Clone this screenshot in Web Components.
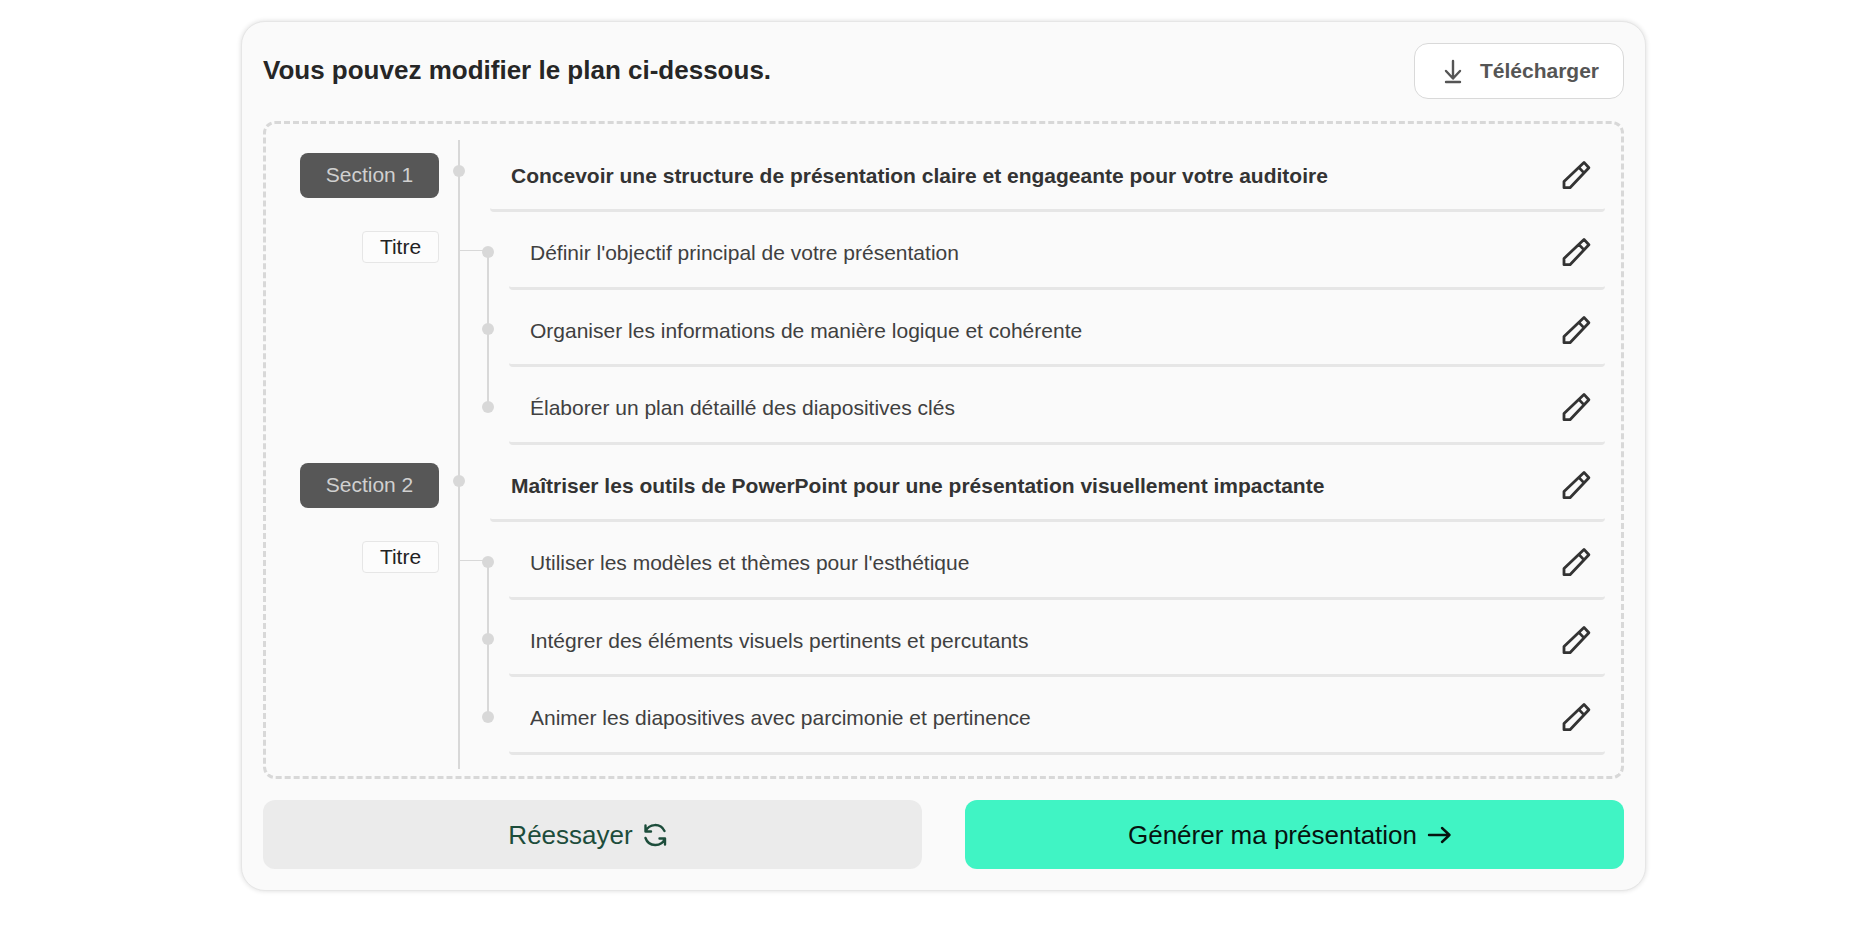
<!DOCTYPE html>
<html lang="fr">
<head>
<meta charset="utf-8">
<meta name="viewport" content="width=device-width, initial-scale=1">
<title>Plan de la présentation</title>
<style>
  body {
    margin: 0;
    padding: 21px 216px 36px 241px;
    background: #fff;
    font-family: "Liberation Sans", Arial, sans-serif;
    font-size: 21px;
    --line: #d8d8d8;
    --surface: #fafafa;
  }
</style>
</head>
<body>
<plan-card heading="Vous pouvez modifier le plan ci-dessous.">
  <download-button slot="tools">Télécharger</download-button>

  <plan-outline>
    <plan-section label="Section 1">
      <plan-row level="section" text="Concevoir une structure de présentation claire et engageante pour votre auditoire"></plan-row>
      <plan-row text="Définir l'objectif principal de votre présentation" first></plan-row>
      <plan-row text="Organiser les informations de manière logique et cohérente"></plan-row>
      <plan-row text="Élaborer un plan détaillé des diapositives clés" last></plan-row>
    </plan-section>
    <plan-section label="Section 2">
      <plan-row level="section" text="Maîtriser les outils de PowerPoint pour une présentation visuellement impactante"></plan-row>
      <plan-row text="Utiliser les modèles et thèmes pour l'esthétique" first></plan-row>
      <plan-row text="Intégrer des éléments visuels pertinents et percutants"></plan-row>
      <plan-row text="Animer les diapositives avec parcimonie et pertinence" last></plan-row>
    </plan-section>
  </plan-outline>

  <action-button slot="actions" icon="retry">Réessayer</action-button>
  <action-button slot="actions" icon="arrow" primary>Générer ma présentation</action-button>
</plan-card>

<script>
class PlanCard extends HTMLElement {
  constructor() {
    super();
    this.attachShadow({ mode: 'open' });
  }

  connectedCallback() {
    this.shadowRoot.innerHTML = `
      <style>
        :host {
          display: block; padding: 21px; border: 1px solid #e6e6e6;
          border-radius: 24px; background: var(--surface);
          box-shadow: 0 0 5px rgba(0,0,0,.14);
        }
        header { display: flex; align-items: center; justify-content: space-between; margin-bottom: 22px; }
        h1 { margin: 0; font-size: 26px; line-height: 30px; padding-bottom: 2px; color: #262626; }
        footer { display: grid; grid-template-columns: 1fr 1fr; gap: 43px; margin-top: 21px; }
      </style>
      <header>
        <h1>${this.getAttribute('heading') || ''}</h1>
        <slot name="tools"></slot>
      </header>
      <slot></slot>
      <footer><slot name="actions"></slot></footer>
    `;
  }
}

class DownloadButton extends HTMLElement {
  constructor() {
    super();
    this.attachShadow({ mode: 'open' });
    this.shadowRoot.innerHTML = `
      <style>
        :host { display: block; }
        button {
          display: flex; align-items: center; gap: 12px;
          height: 56px; padding: 0 24px 0 23px;
          border: 1px solid #d9d9d9; border-radius: 14px; background: #fff;
          font: bold 21px/24px "Liberation Sans", Arial, sans-serif;
          color: #555; cursor: pointer;
        }
        svg { display: block; fill: none; stroke: currentColor; stroke-width: 2.4; stroke-linecap: round; stroke-linejoin: round; }
      </style>
      <button type="button">
        <svg width="30" height="30" viewBox="0 0 30 30" aria-hidden="true">
          <path d="M15 5v17M8 15l7 7.500 7-7.500M8 26h14"/>
        </svg>
        <slot></slot>
      </button>
    `;
  }
}

class PlanOutline extends HTMLElement {
  constructor() {
    super();
    this.attachShadow({ mode: 'open' });
    this.shadowRoot.innerHTML = `
      <style>
        :host {
          display: block; padding: 16px 16px 7px;
          border: 3px dashed var(--line); border-radius: 12px;
        }
        .tree { position: relative; padding-bottom: 9px; }
        /* main rail, runs behind the section dots */
        .tree::before {
          content: ""; position: absolute; top: 0; bottom: 0; left: 176px;
          width: 2px; background: var(--line);
        }
      </style>
      <div class="tree"><slot></slot></div>
    `;
  }
}

class PlanSection extends HTMLElement {
  constructor() {
    super();
    this.attachShadow({ mode: 'open' });
  }

  connectedCallback() {
    this.shadowRoot.innerHTML = `
      <style>
        :host { display: flex; gap: 14px; min-height: 310px; }
        .labels {
          display: flex; flex-direction: column; align-items: flex-end; gap: 33px;
          flex: none; width: 157px; padding-top: 13px;
        }
        .badge, .tag { display: flex; align-items: center; justify-content: center; box-sizing: border-box; }
        .badge { width: 139px; height: 45px; padding-bottom: 2px; border-radius: 8px; background: #575757; color: #d0d0d0; }
        .tag { width: 77px; height: 32px; border: 1px solid #e6e6e6; border-radius: 4px; background: #fcfcfc; color: #222; }
        .rows { flex: 1; min-width: 0; display: grid; grid-auto-rows: 1fr; }
      </style>
      <div class="labels">
        <span class="badge">${this.getAttribute('label') || ''}</span>
        <span class="tag">Titre</span>
      </div>
      <div class="rows"><slot></slot></div>
    `;
  }
}

class PlanRow extends HTMLElement {
  constructor() {
    super();
    this.attachShadow({ mode: 'open' });
  }

  connectedCallback() {
    this.shadowRoot.innerHTML = `
      <style>
        :host { display: flex; align-items: flex-start; gap: 15px; position: relative; padding-left: 29px; }
        :host([level="section"]) { gap: 25px; padding-left: 0; }
        .dot { flex: none; width: 12px; height: 12px; margin-top: 28px; border-radius: 50%; background: var(--line); }
        :host([level="section"]) .dot { margin-top: 25px; position: relative; }
        /* rail down to the next title */
        :host(:not([level="section"]):not([last]))::before {
          content: ""; position: absolute; left: 34px; top: 34px;
          width: 2px; height: 100%; background: var(--line);
        }
        /* branch from the main rail */
        :host([first])::after {
          content: ""; position: absolute; left: 7px; top: 32px;
          width: 24px; height: 1px; background: var(--line);
        }
        .field {
          display: flex; align-items: center; flex: 1; min-width: 0; height: 72px;
          box-sizing: border-box; padding: 0 13px 0 21px;
          border-bottom: 3px solid #e6e6e6; border-radius: 4px;
        }
        input {
          flex: 1; min-width: 0; padding: 2px 0 0; border: 0; outline: 0; background: transparent;
          font: 21px/28px "Liberation Sans", Arial, sans-serif; color: #404040;
        }
        :host([level="section"]) input { font-weight: bold; color: #333; }
        button { flex: none; padding: 0; border: 0; background: transparent; color: #333; cursor: pointer; }
        svg { display: block; fill: none; stroke: currentColor; stroke-width: 2.8; stroke-linejoin: round; }
      </style>
      <span class="dot"></span>
      <div class="field">
        <input type="text" aria-label="Titre">
        <button type="button" aria-label="Modifier">
          <svg width="32" height="32" viewBox="0 0 32 32" aria-hidden="true">
            <path d="M4 28.700V22.500L24 3.400L28.900 8.800L10 28.700ZM18.800 8.400L24 13.900"/>
          </svg>
        </button>
      </div>
    `;
    this._input = this.shadowRoot.querySelector('input');
    this._input.value = this.getAttribute('text') || '';
    this.shadowRoot.querySelector('button').addEventListener('click', () => this._input.focus());
  }
}

const ACTION_ICONS = {
  retry: '<path d="M8.500 8.500v6h5.500M8.500 14.500a10.400 10.400 0 0 1 19 -.5M28 27.500v-6h-5.500M28 21.500a10.400 10.400 0 0 1 -19.500 -.5"/>',
  arrow: '<path d="M8 18h20.500M21 11l7.500 7-7.500 7"/>'
};

class ActionButton extends HTMLElement {
  constructor() {
    super();
    this.attachShadow({ mode: 'open' });
  }

  connectedCallback() {
    this.shadowRoot.innerHTML = `
      <style>
        :host { display: block; }
        button {
          display: flex; align-items: center; justify-content: center; gap: 4px;
          width: 100%; height: 69px; padding: 0 4px 0 0; border: 0; border-radius: 12px;
          background: #ebebeb; color: #1d4d3b;
          font: 26px/32px "Liberation Sans", Arial, sans-serif; cursor: pointer;
        }
        :host([primary]) button { background: #40f4c4; color: #06130f; }
        svg { display: block; fill: none; stroke: currentColor; stroke-width: 2.4; stroke-linecap: round; stroke-linejoin: round; }
      </style>
      <button type="button">
        <slot></slot>
        <svg width="36" height="36" viewBox="0 0 36 36" aria-hidden="true">${ACTION_ICONS[this.getAttribute('icon')] || ''}</svg>
      </button>
    `;
  }
}

customElements.define('plan-card', PlanCard);
customElements.define('download-button', DownloadButton);
customElements.define('plan-outline', PlanOutline);
customElements.define('plan-section', PlanSection);
customElements.define('plan-row', PlanRow);
customElements.define('action-button', ActionButton);
</script>
</body>
</html>
